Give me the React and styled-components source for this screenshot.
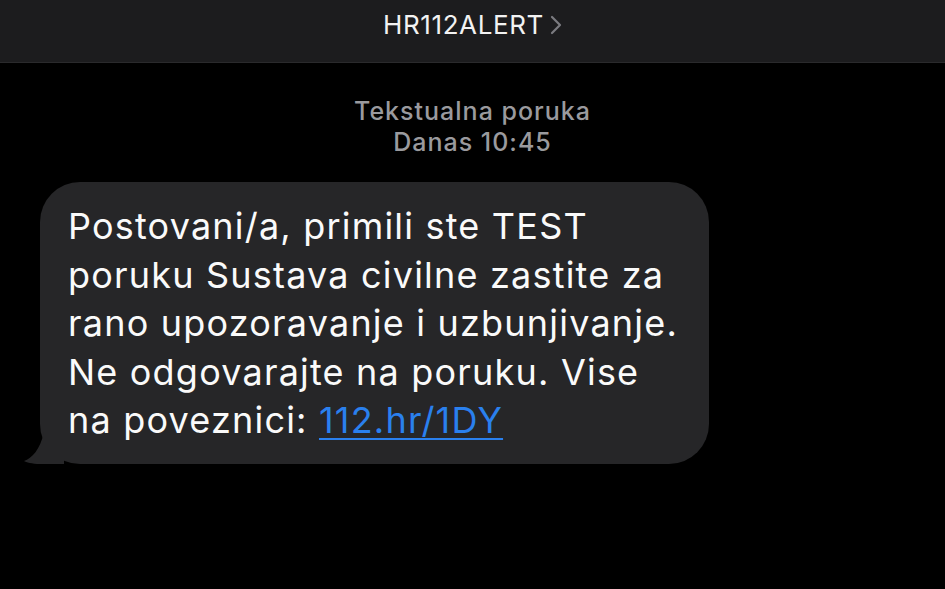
import React from 'react';
import styled, { createGlobalStyle } from 'styled-components';

const Global = createGlobalStyle`
  html, body { margin: 0; padding: 0; background: #000; }
  body { font-family: Inter, "Noto Sans", sans-serif; -webkit-font-smoothing: antialiased; }
`;

const Screen = styled.div`
  width: 945px;
  height: 589px;
  background: #000;
  overflow: hidden;
  display: flex;
  flex-direction: column;
`;

const Header = styled.header`
  height: 63px;
  background: #1c1c1e;
  border-bottom: 1px solid #2a2a2c;
  display: flex;
  align-items: flex-start;
  justify-content: center;
  padding-top: 9px;
  box-sizing: border-box;
  flex-shrink: 0;
`;

const Title = styled.div`
  display: flex;
  align-items: center;
  gap: 6px;
  color: #f2f2f2;
  font-size: 26px;
  letter-spacing: 0.6px;
`;

const Meta = styled.div`
  margin-top: 33px;
  text-align: center;
  color: #9a9a9e;
  font-size: 25px;
  font-weight: 500;
  line-height: 31px;
  letter-spacing: 1px;
`;

const Thread = styled.div`
  padding: 24px 0 0 40px;
`;

const Bubble = styled.div`
  position: relative;
  width: 669px;
  box-sizing: border-box;
  background: #262628;
  border-radius: 40px;
  padding: 20px 20px 19px 28px;
  color: #fafafa;
  font-size: 36px;
  line-height: 48.5px;
  letter-spacing: 1.2px;
`;

const Tail = styled.svg`
  position: absolute;
  left: -16px;
  bottom: 0;
`;

const Link = styled.a`
  color: #2a80ee;
  text-decoration: underline;
  text-decoration-thickness: 2px;
  text-underline-offset: 5px;
`;

const Chevron = () => (
  <svg width="12" height="20" viewBox="0 0 12 20">
    <path d="M2 2 L10 10 L2 18" fill="none" stroke="#7b7b80" strokeWidth="2.2" strokeLinecap="round" strokeLinejoin="round" />
  </svg>
);

export default function App() {
  return (
    <Screen>
      <Global />
      <Header>
        <Title>
          HR112ALERT
          <Chevron />
        </Title>
      </Header>
      <Meta>
        Tekstualna poruka
        <br />
        Danas 10:45
      </Meta>
      <Thread>
        <Bubble>
          <Tail width="40" height="32" viewBox="0 0 40 32">
            <path d="M40 0 L40 32 L16 32 C 8 32 2 30 0 29 C 8 26 16 18 20 0 Z" fill="#262628" />
          </Tail>
          Postovani/a, primili ste TEST
          <br />
          poruku Sustava civilne zastite za
          <br />
          rano upozoravanje i uzbunjivanje.
          <br />
          Ne odgovarajte na poruku. Vise
          <br />
          na poveznici: <Link href="#">112.hr/1DY</Link>
        </Bubble>
      </Thread>
    </Screen>
  );
}
